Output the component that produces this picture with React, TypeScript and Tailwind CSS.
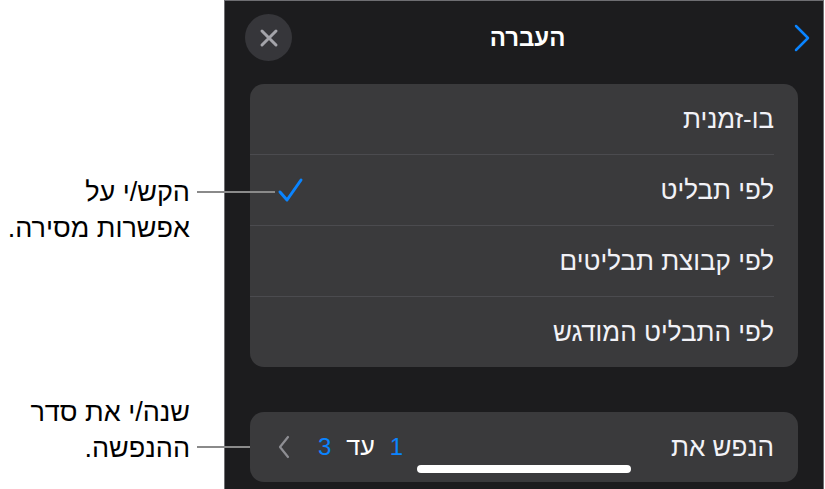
import React from "react";

const font = { fontFamily: '"Liberation Sans", "DejaVu Sans", Arial, sans-serif' };

function Row({ label, check, last }: { label: string; check?: boolean; last?: boolean }) {
  return (
    <div className="flex flex-col">
      <div className="h-[70px] flex items-center justify-between pr-6 pl-7">
        <div className="w-6 h-6 flex items-center justify-center">
          {check && (
            <svg width="27" height="26" viewBox="0 0 27 26" fill="none" className="shrink-0">
              <path d="M3 15 L10 23 L24 3" stroke="#0a84ff" strokeWidth="3" strokeLinecap="round" strokeLinejoin="round" />
            </svg>
          )}
        </div>
        <span className="text-[26px] text-[#f2f2f7]" dir="rtl">{label}</span>
      </div>
      {!last && <div className="h-px bg-[#4b4b4f] mr-6" />}
    </div>
  );
}

export default function App() {
  return (
    <div className="relative w-[825px] h-[489px] bg-white flex overflow-hidden" style={font}>
      {/* callouts */}
      <div className="w-[224px] flex flex-col text-[27px] text-black leading-[36px] text-right pr-[34px]" dir="rtl">
        <div className="mt-[174px]">
          <div>הקש/י על</div>
          <div>אפשרות מסירה.</div>
        </div>
        <div className="mt-[148px]">
          <div>שנה/י את סדר</div>
          <div>ההנפשה.</div>
        </div>
      </div>

      {/* panel */}
      <div className="w-[600px] h-full bg-[#1c1c1e] border-l border-t border-r border-[#6e6e72] flex flex-col">
        <div className="h-[73px] grid grid-cols-[1fr_auto_1fr] items-center pl-5 pr-[13px]">
          <div className="w-[47px] h-[47px] rounded-full bg-[#36363a] flex items-center justify-center">
            <svg width="20" height="20" viewBox="0 0 20 20">
              <path d="M3 3 L17 17 M17 3 L3 17" stroke="#a4a4aa" strokeWidth="3" strokeLinecap="round" />
            </svg>
          </div>
          <div className="text-[24px] font-bold text-white" dir="rtl">העברה</div>
          <div className="flex justify-end">
            <svg width="16" height="28" viewBox="0 0 16 28">
              <path d="M2 2 L14 14 L2 26" stroke="#0a84ff" strokeWidth="2.5" fill="none" strokeLinecap="round" strokeLinejoin="round" />
            </svg>
          </div>
        </div>

        <div className="mx-[25px] mt-[10px] rounded-[14px] bg-[#3a3a3c] flex flex-col">
          <Row label="בו-זמנית" />
          <Row label="לפי תבליט" check />
          <Row label="לפי קבוצת תבליטים" />
          <Row label="לפי התבליט המודגש" last />
        </div>

        <div className="mx-[25px] mt-[45px] h-[70px] rounded-[14px] bg-[#3a3a3c] flex items-center justify-between pr-6 pl-7">
          <div className="flex items-center gap-[28px]">
            <svg width="12" height="24" viewBox="0 0 12 24">
              <path d="M10 2 L2 12 L10 22" stroke="#8e8e93" strokeWidth="2.2" fill="none" strokeLinecap="round" strokeLinejoin="round" />
            </svg>
            <div className="flex items-center gap-[15px] text-[25px]" dir="rtl">
              <span className="text-[#0a84ff] text-[24px]">1</span>
              <span className="text-white">עד</span>
              <span className="text-[#0a84ff] text-[24px]">3</span>
            </div>
          </div>
          <span className="text-[26px] text-[#f2f2f7]" dir="rtl">הנפש את</span>
        </div>
      </div>

      {/* leader lines */}
      <div className="absolute left-[197px] top-[191px] w-[78px] h-[2px] bg-[#8a8a8a]" />
      <div className="absolute left-[197px] top-[446px] w-[53px] h-[2px] bg-[#8a8a8a]" />
      {/* home indicator */}
      <div className="absolute left-[417px] top-[465px] w-[214px] h-[8px] rounded-full bg-white" />
    </div>
  );
}
